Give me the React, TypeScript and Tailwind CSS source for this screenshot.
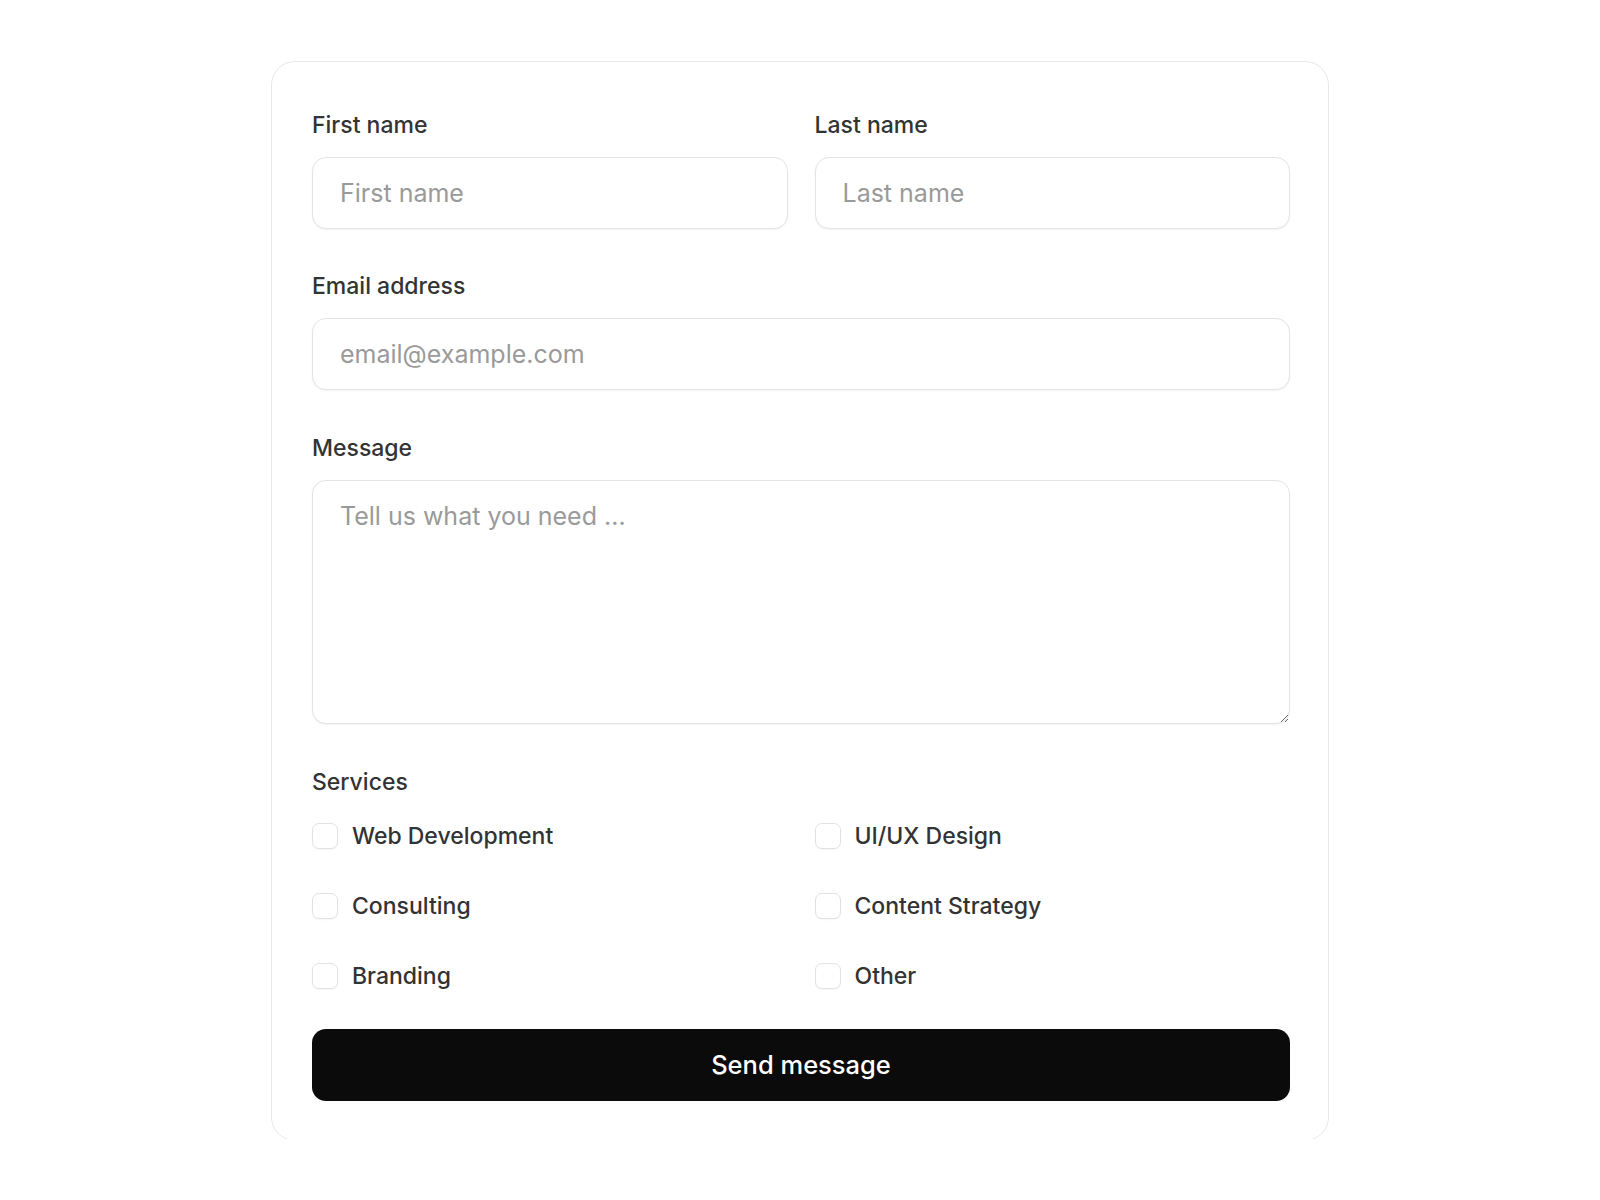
import React, { useState } from "react"

const services = [
  "Web Development",
  "UI/UX Design",
  "Consulting",
  "Content Strategy",
  "Branding",
  "Other",
]

function Label({ children }: { children: React.ReactNode }) {
  return (
    <div className="mb-[16px] text-[23px] leading-[32px] font-medium text-[#333333]">
      {children}
    </div>
  )
}

const inputClass =
  "w-full h-[72px] px-[27px] rounded-[14px] border border-[#e4e4e4] bg-white text-[25px] text-[#333333] placeholder:text-[#9a9a9a] shadow-[0_1px_2px_rgba(0,0,0,0.05)] outline-none"

export default function App() {
  const [checked, setChecked] = useState<string[]>([])

  const toggle = (name: string) => {
    setChecked(
      checked.includes(name)
        ? checked.filter((c) => c !== name)
        : [...checked, name],
    )
  }

  return (
    <div
      className="min-h-[1200px] bg-white pt-[61px]"
      style={{ fontFamily: "Inter, 'Noto Sans', sans-serif" }}
    >
      {/* card is cut off at the bottom in the design */}
      <div className="mx-auto w-[1058px] h-[1078px] overflow-hidden">
        <form
          className="w-full rounded-[24px] border border-[#e8e8e8] bg-white pl-[40px] pr-[38px] pt-[47px] pb-[39px]"
          onSubmit={(e) => e.preventDefault()}
        >
          <div className="grid grid-cols-2 gap-[27px]">
            <div>
              <Label>First name</Label>
              <input className={inputClass} placeholder="First name" />
            </div>
            <div>
              <Label>Last name</Label>
              <input className={inputClass} placeholder="Last name" />
            </div>
          </div>

          <div className="mt-[41px]">
            <Label>Email address</Label>
            <input
              type="email"
              className={inputClass}
              placeholder="email@example.com"
            />
          </div>

          <div className="mt-[42px]">
            <Label>Message</Label>
            <textarea
              className="block w-full h-[244px] px-[27px] py-[18px] rounded-[14px] border border-[#e4e4e4] bg-white text-[25px] leading-[34px] text-[#333333] placeholder:text-[#9a9a9a] shadow-[0_1px_2px_rgba(0,0,0,0.05)] outline-none"
              placeholder="Tell us what you need ..."
            />
          </div>

          <div className="mt-[42px]">
            <div className="text-[23px] leading-[32px] font-medium text-[#333333]">
              Services
            </div>
            <div className="mt-[22px] grid grid-cols-2 gap-x-[27px] gap-y-[38px]">
              {services.map((s) => (
                <label
                  key={s}
                  className="flex items-center gap-[14px] h-[32px] cursor-pointer"
                >
                  <input
                    type="checkbox"
                    checked={checked.includes(s)}
                    onChange={() => toggle(s)}
                    className="appearance-none w-[26px] h-[26px] rounded-[7px] border border-[#e2e2e2] bg-white shadow-[0_1px_2px_rgba(0,0,0,0.04)] checked:bg-[#0a0a0a] checked:border-[#0a0a0a]"
                  />
                  <span className="text-[23px] leading-[32px] font-medium text-[#333333]">
                    {s}
                  </span>
                </label>
              ))}
            </div>
          </div>

          <button
            type="submit"
            className="mt-[37px] w-full h-[72px] rounded-[14px] bg-[#0b0b0b] text-white text-[25.5px] font-medium"
          >
            Send message
          </button>
        </form>
      </div>
    </div>
  )
}
